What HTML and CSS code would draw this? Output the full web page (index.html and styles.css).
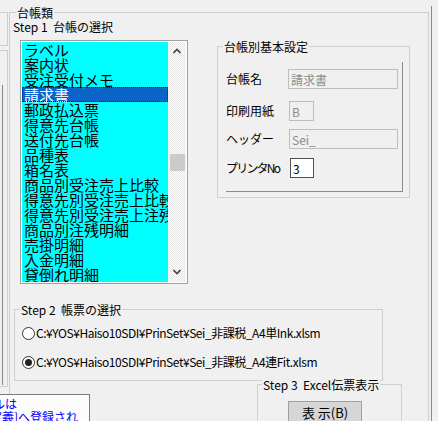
FILE: index.html
```html
<!DOCTYPE html>
<html lang="ja">
<head>
  <meta charset="UTF-8" />
  <meta name="viewport" content="width=device-width, initial-scale=1.0" />
  <title>台帳類</title>
  <link rel="stylesheet" href="styles.css">
</head>
<body>
  <div class="left-edge">
    <div class="edge-box"></div>
    <div class="edge-frame"><div class="edge-line"></div></div>
  </div>

  <fieldset class="group ledger">
    <legend>台帳類</legend>
    <div class="top-row">
      <div class="step1">
        <div class="step-label">Step 1&nbsp; 台帳の選択</div>
        <div class="listbox">
          <ul class="items">
            <li>ラベル</li>
            <li>案内状</li>
            <li>受注受付メモ</li>
            <li class="selected">請求書</li>
            <li>郵政払込票</li>
            <li>得意先台帳</li>
            <li>送付先台帳</li>
            <li>品種表</li>
            <li>箱名表</li>
            <li>商品別受注売上比較</li>
            <li>得意先別受注売上比較</li>
            <li>得意先別受注売上注残</li>
            <li>商品別注残明細</li>
            <li>売掛明細</li>
            <li>入金明細</li>
            <li>貸倒れ明細</li>
          </ul>
          <div class="scrollbar">
            <svg class="arrow" width="8" height="6" viewBox="0 0 8 6"><polyline points="0.5,5 4,1.5 7.5,5" /></svg>
            <div class="thumb"></div>
            <svg class="arrow arrow-down" width="8" height="6" viewBox="0 0 8 6"><polyline points="0.5,1 4,4.5 7.5,1" /></svg>
          </div>
        </div>
      </div>

      <fieldset class="group settings">
        <legend>台帳別基本設定</legend>
        <div class="settings-panel">
          <div class="field">
            <label>台帳名</label>
            <input class="input name" type="text" value="請求書" disabled />
          </div>
          <div class="field field-paper">
            <label>印刷用紙</label>
            <input class="input short" type="text" value="B" disabled />
          </div>
          <div class="field field-header">
            <label>ヘッダー</label>
            <input class="input header" type="text" value="Sei_" disabled />
          </div>
          <div class="field field-printer">
            <label class="narrow">プリンタNo</label>
            <input class="input printer" type="text" value="3" />
          </div>
        </div>
      </fieldset>
    </div>

    <fieldset class="group step2">
      <legend>Step 2&nbsp; 帳票の選択</legend>
      <label class="radio"><span class="dot"></span>C:¥YOS¥Haiso10SDI¥PrinSet¥Sei_非課税_A4単Ink.xlsm</label>
      <label class="radio checked"><span class="dot"></span>C:¥YOS¥Haiso10SDI¥PrinSet¥Sei_非課税_A4連Fit.xlsm</label>
    </fieldset>

    <fieldset class="group step3">
      <legend>Step 3&nbsp; Excel伝票表示</legend>
      <button class="show-btn">表 示(B)</button>
    </fieldset>
  </fieldset>

  <div class="right-edge"></div>

  <div class="note">
    <div class="note-line1">ファイルは</div>
    <div class="note-line2">[印刷定義]へ登録され</div>
  </div>
</body>
</html>
```

FILE: styles.css
```css
body {
  margin: 0;
  height: 421px;
  overflow: hidden;
  display: flex;
  align-items: flex-start;
  position: relative;
  background: #f0f0f0;
  font-family: "Noto Sans CJK JP", "Noto Sans", sans-serif;
  font-size: 12px;
  line-height: 14px;
  color: #000;
}

/* bits of neighbouring controls at the edges */
.left-edge {
  width: 9px;
  flex-shrink: 0;
}
.edge-box {
  margin-top: 12px;
  width: 8px;
  height: 34px;
  box-sizing: border-box;
  border: 1px solid #cfcfcf;
  border-left: none;
}
.edge-frame {
  margin-top: 4px;
  width: 8px;
  height: 337px;
  box-sizing: border-box;
  border: 1px solid #cfcfcf;
  border-left: none;
}
.edge-line {
  margin-top: 34px;
  width: 3px;
  height: 300px;
  box-sizing: border-box;
  border-right: 1px solid #7d8c7d;
}
.right-edge {
  margin: 6px 0 0 2px;
  height: 415px;
  border-left: 1px solid #8a8a8a;
}

/* group boxes */
.group {
  margin: 0;
  padding: 0;
  min-width: 0;
  border: 1px solid #cfcfcf;
  box-sizing: border-box;
}
.group legend {
  padding: 0 1px;
  line-height: 13px;
  font-size: 12px;
}
.ledger {
  margin-top: 6px;
  width: 420px;
  height: 415px;
  flex-shrink: 0;
  border-bottom: none;
  overflow: hidden;
}
.ledger > legend {
  margin-left: 6px;
}

.top-row {
  display: flex;
  align-items: flex-start;
}
.step1 {
  width: 178px;
  padding: 1px 0 0 3px;
  box-sizing: border-box;
}

/* list box */
.listbox {
  display: flex;
  margin: 6px 0 0 7px;
  width: 168px;
  height: 244px;
  box-sizing: border-box;
  padding: 1px;
  border: 1px solid #a0a0a0;
  background: #fff;
}
.items {
  list-style: none;
  margin: 0;
  padding: 0;
  width: 146px;
  background: #00ffff;
  font-size: 15px;
  line-height: 15px;
  white-space: nowrap;
  overflow: hidden;
}
.items li {
  height: 15px;
  padding-left: 2px;
}
.items li.selected {
  background: #0a64c8;
  color: #fff;
  outline: 1px dotted #222;
  outline-offset: -1px;
}
.scrollbar {
  width: 18px;
  display: flex;
  flex-direction: column;
  align-items: center;
  background: repeating-conic-gradient(#ffffff 0 25%, #e4e4e4 0 50%) 0 0 / 2px 2px;
}
.arrow {
  margin-top: 6px;
  fill: none;
  stroke: #444;
  stroke-width: 1.6;
}
.thumb {
  margin-top: 100px;
  width: 15px;
  height: 17px;
  background: #cbcbcb;
}
.arrow-down {
  margin-top: 98px;
}

/* settings */
.settings {
  margin: 21px 0 0 29px;
  width: 193px;
}
.settings > legend {
  margin-left: 5px;
}
.settings-panel {
  margin: 9px 6px 5px 8px;
  padding: 7px 0 13px 0;
  border-right: 1px solid #8c8c8c;
  border-bottom: 1px solid #8c8c8c;
}
.field {
  display: flex;
  align-items: center;
  height: 20px;
}
.field label {
  width: 62px;
  flex-shrink: 0;
  white-space: nowrap;
}
.field label.narrow {
  letter-spacing: -1.8px;
}
.field-paper {
  margin-top: 12px;
}
.field-header {
  margin-top: 8px;
}
.field-printer {
  margin-top: 9px;
}
.input {
  height: 20px;
  box-sizing: border-box;
  padding: 0 2px;
  border: 1px solid #bdbdbd;
  background: #f0f0f0;
  color: #8c8c8c;
  font-family: inherit;
  font-size: 12px;
}
.input.name {
  width: 110px;
}
.input.short {
  margin-left: 1px;
  width: 25px;
}
.input.header {
  margin-left: 1px;
  width: 109px;
}
.input.printer {
  margin-left: 2px;
  width: 24px;
  border-color: #505050;
  background: #fff;
  color: #000;
}

/* step 2 */
.step2 {
  margin: 19px 0 0 4px;
  width: 369px;
  padding: 7px 0 8px 7px;
}
.step2 > legend {
  margin-left: -2px;
}
.radio {
  display: flex;
  align-items: center;
  height: 20px;
  white-space: nowrap;
  letter-spacing: -0.45px;
}
.radio + .radio {
  margin-top: 9px;
}
.dot {
  position: relative;
  width: 13px;
  height: 13px;
  margin-right: 1px;
  box-sizing: border-box;
  border: 1px solid #333;
  border-radius: 50%;
  background: #fff;
}
.radio.checked .dot::after {
  content: "";
  position: absolute;
  left: 2px;
  top: 2px;
  width: 7px;
  height: 7px;
  border-radius: 50%;
  background: #222;
}

/* step 3 */
.step3 {
  margin: -3px 0 0 247px;
  width: 145px;
  height: 60px;
}
.step3 > legend {
  margin-left: 4px;
  background: #f0f0f0;
}
.show-btn {
  margin: 10px 0 0 30px;
  width: 74px;
  height: 23px;
  padding: 0;
  border: 1px solid #a0a0a0;
  background: #d6d6d6;
  font-family: inherit;
  font-size: 13px;
  color: #000;
}

/* hint box overlapping the bottom-left corner */
.note {
  position: absolute;
  left: 0;
  top: 394px;
  width: 90px;
  height: 27px;
  box-sizing: border-box;
  padding-top: 2px;
  border-top: 1px solid #7a7a7a;
  border-right: 1px solid #7a7a7a;
  background: #fcfcfc;
  color: #0000ff;
  line-height: 13px;
  white-space: nowrap;
  overflow: hidden;
}
.note-line1 {
  margin-left: -43px;
}
.note-line2 {
  margin-left: -38px;
}
```
